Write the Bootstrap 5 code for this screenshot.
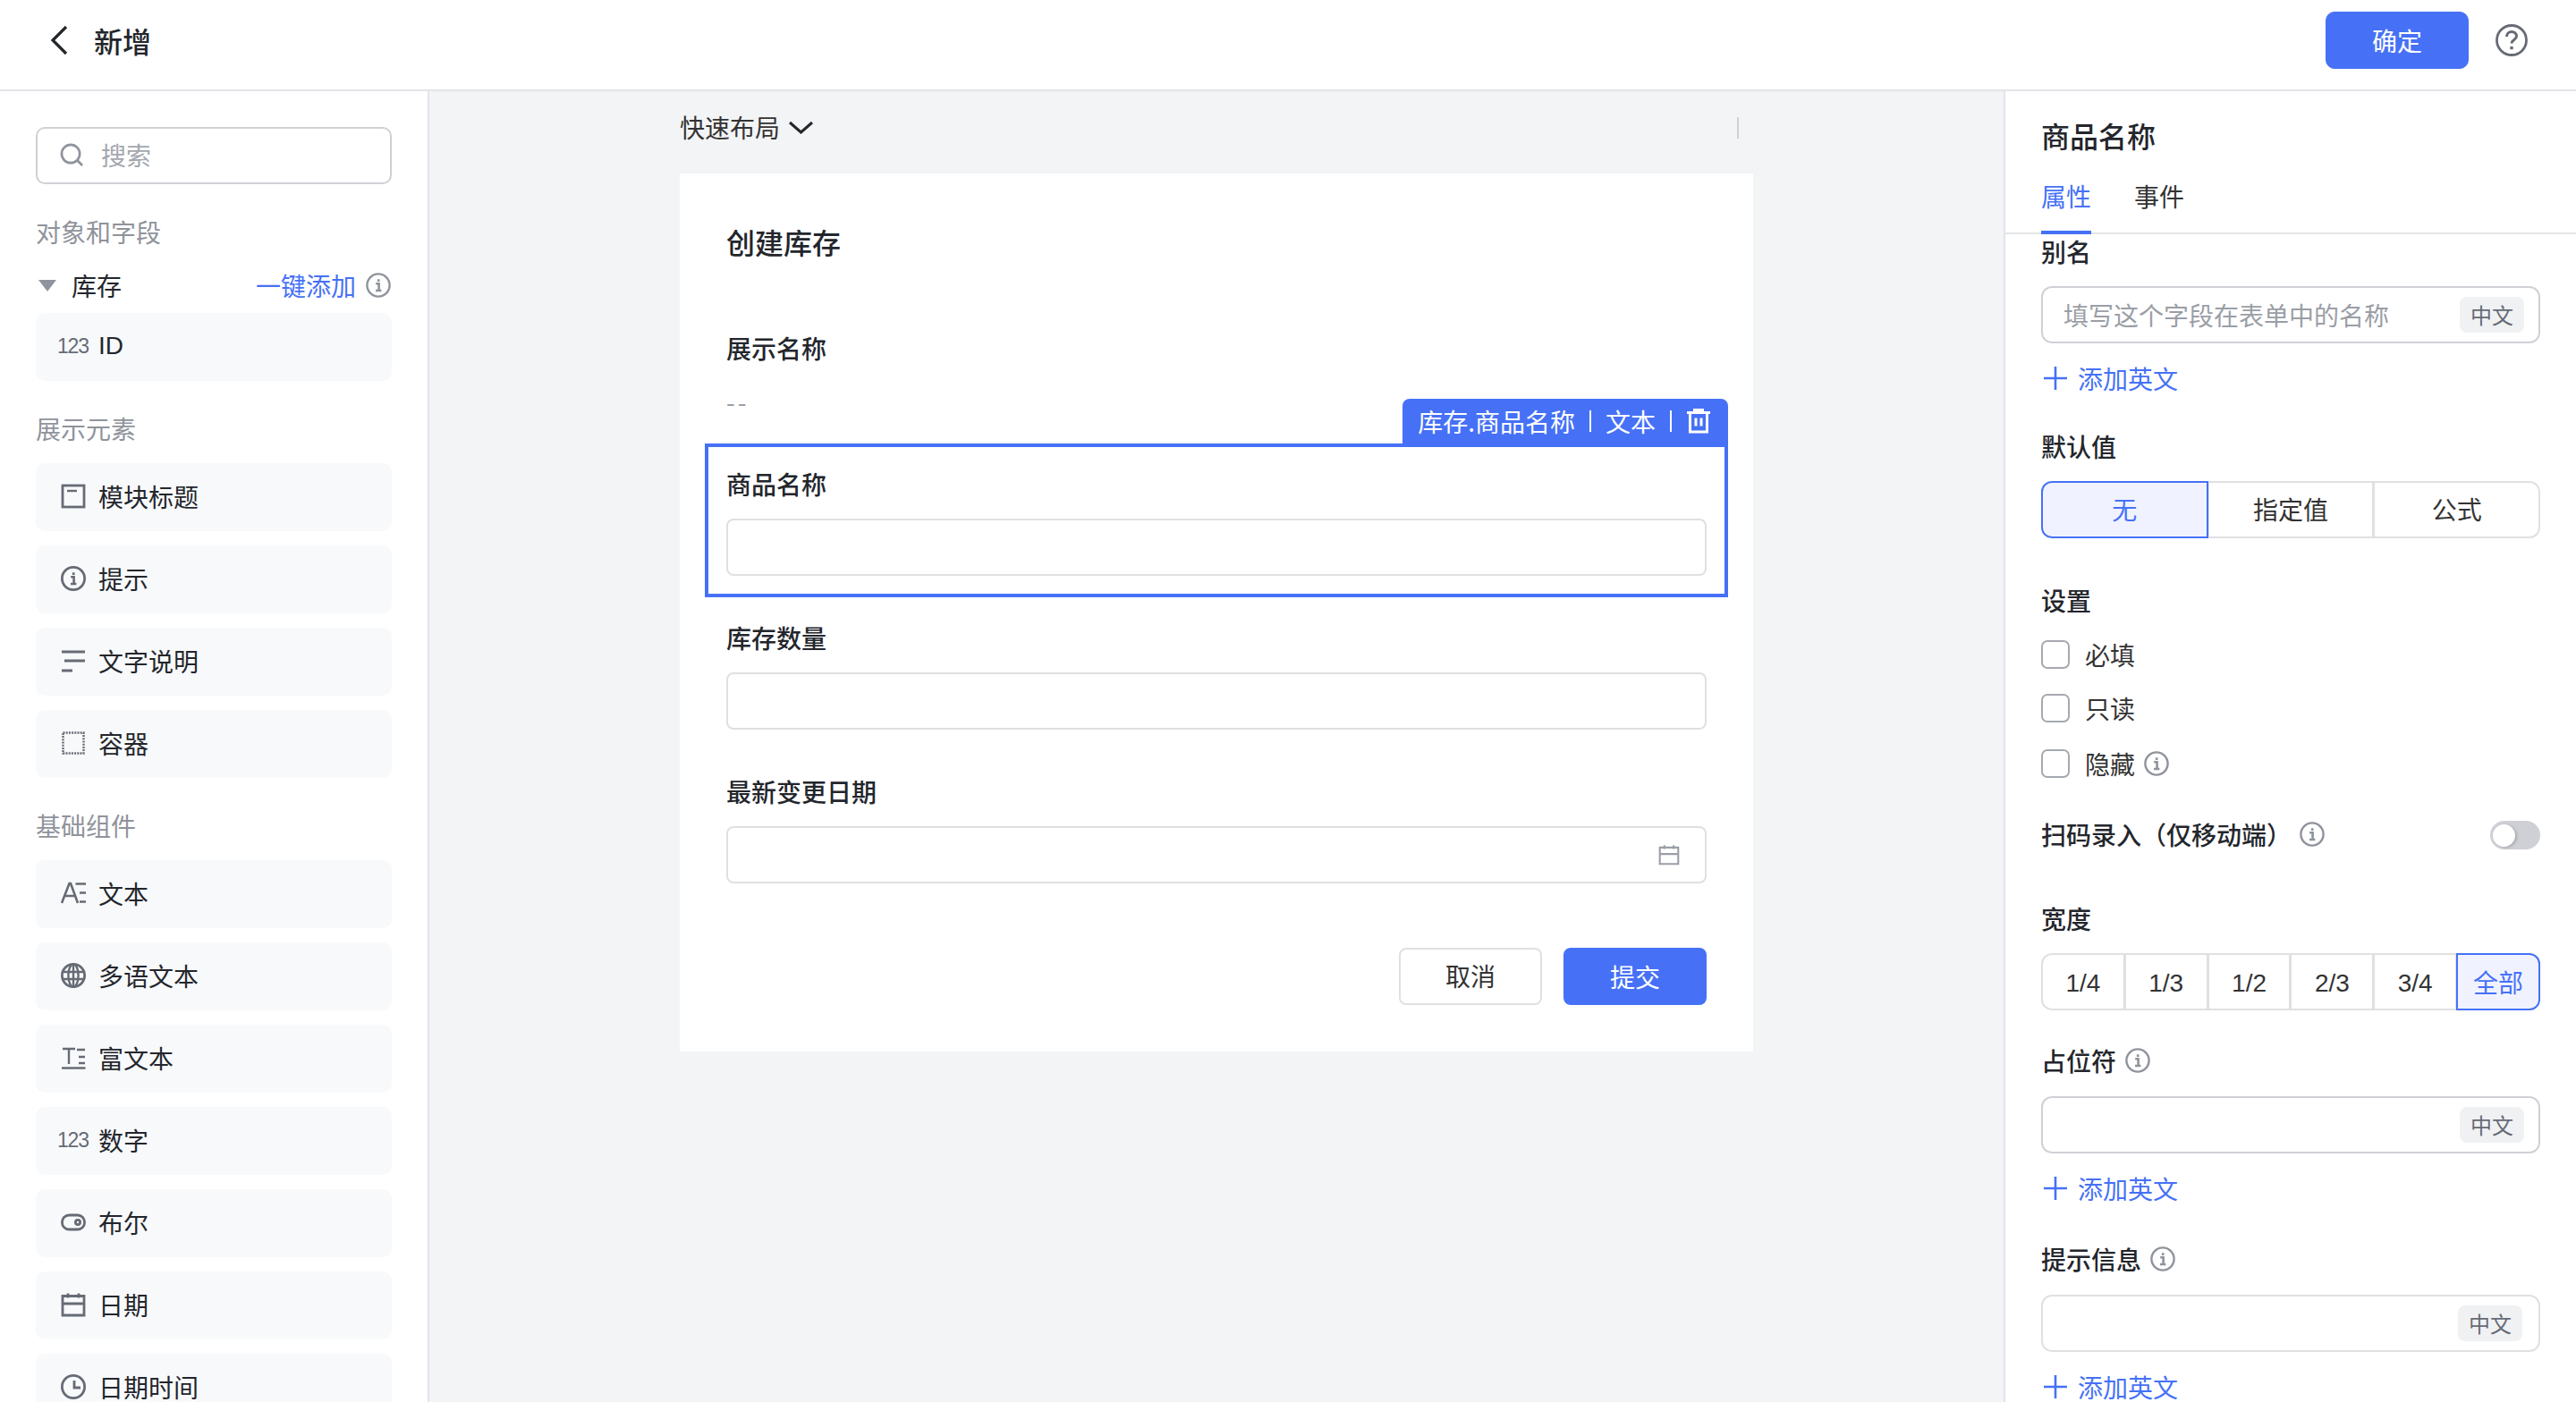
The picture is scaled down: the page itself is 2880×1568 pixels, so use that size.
<!doctype html>
<html lang="zh-CN">
<head>
<meta charset="utf-8">
<title>新增</title>
<link href="https://cdn.jsdelivr.net/npm/bootstrap@5.3.0/dist/css/bootstrap.min.css" rel="stylesheet">
<style>
:root{--blue:#4671f6;--ink:#23262c;--muted:#8f939b;--rule:#e3e4e8;--line:#e0e0e3;--soft:#d0d1d6;}
html,body{height:100%;}
body{width:2880px;height:1568px;overflow:hidden;font-family:"Noto Sans CJK SC","Liberation Sans",sans-serif;font-size:28px;line-height:40px;color:var(--ink);background:#fff;}
.latin{font-family:"Liberation Sans",sans-serif;}
.ic{display:block;flex:none;width:28px;height:28px;fill:none;stroke:currentColor;stroke-width:2.4;}
.top-strip{height:102px;border-bottom:2px solid var(--rule);padding:0 40px 10px 56px;}
.back-ic{width:20px;height:34px;color:var(--ink);stroke-width:3.2;}
.page-name{font-size:32px;font-weight:500;margin:0 0 0 29px;line-height:46px;}
.btn.btn-ok{width:160px;height:64px;margin-right:30px;background:var(--blue);border-color:var(--blue);color:#fff;font-size:28px;line-height:1;border-radius:10px;padding:0;}
.help-ic{width:36px;height:36px;color:#666b75;margin-right:14px;}
.work{height:1466px;}
.left-rail{width:480px;flex:none;border-right:2px solid var(--rule);padding:40px 40px 0;overflow:hidden;}
.search-box{height:64px;border:2px solid var(--soft);border-radius:10px;padding:0 0 2px 25px;gap:19px;color:#a4a7ae;}
.search-box svg{width:27px;height:27px;color:#8f939b;}
.rail-title{color:var(--muted);margin:34px 0 18px;height:40px;line-height:38px;}
.obj-row{height:40px;margin-bottom:10px;padding-bottom:2px;}
.caret{width:0;height:0;border-left:10px solid transparent;border-right:10px solid transparent;border-top:13px solid #8f939b;margin:0 17px 0 3px;}
.link-blue{color:var(--blue);}
.info-soft{color:#8f939b;}
.obj-info{margin:0 1px 0 11px;}
.rail-item{height:76px;background:#f8f9fb;border-radius:10px;padding:0 0 2px 28px;gap:14px;margin-bottom:16px;}
.rail-item .ic{color:#666b75;stroke-width:2.8;}
.rail-item .num{width:34px;margin-left:-4px;margin-right:-2px;font-size:23px;letter-spacing:-1.2px;color:#666b75;line-height:1;flex:none;}
.canvas{flex:1 1 auto;background:#f3f4f6;padding-left:280px;overflow:hidden;min-width:0;}
.canvas-in{width:1200px;}
.quick-bar{height:92px;padding:20px 16px 0 0;color:#333;}
.chev{width:29px;height:15px;margin-left:9px;color:var(--ink);stroke-width:3;}
.bar-rule{width:2px;height:24px;margin-top:9px;background:#d0d1d6;}
.form-sheet{background:#fff;padding:53px 52px 52px;height:982px;}
.form-name{font-size:32px;line-height:46px;font-weight:500;margin:0;}
.fld-label{font-weight:500;line-height:38px;height:40px;margin:0 0 18px;}
.shown-value{color:#9a9ea6;line-height:40px;margin:19px 0 27px;letter-spacing:3px;}
.form-control.plain-in{height:64px;border:2px solid var(--line);border-radius:8px;background:#fff;padding:0 26px;font-size:28px;box-shadow:none;}
.date-wrap{height:64px;border:2px solid var(--line);border-radius:8px;padding-right:28px;}
.date-wrap svg{color:#9a9ea6;width:24px;height:24px;}
.picked{position:relative;margin:0 -24px 26px;border:4px solid var(--blue);padding:22px 20px 20px;}
.picked .fld-label{margin-bottom:18px;}
.tag-bar{position:absolute;top:-54px;right:-4px;height:54px;padding:0 19px 4px 17px;gap:16px;background:var(--blue);color:#fff;border-radius:8px 8px 0 0;}
.tag-sep{width:2px;height:24px;background:#fff;}
.tag-bar svg{width:28px;height:28px;stroke-width:3;}
.btn-row{margin-top:72px;gap:24px;}
.btn.btn-ghost{width:160px;height:64px;padding:0 0 2px;border:2px solid var(--line);border-radius:8px;background:#fff;color:#333;font-size:28px;}
.btn.btn-fill{width:160px;height:64px;padding:0;border:2px solid var(--blue);border-radius:8px;background:var(--blue);color:#fff;font-size:28px;}
.prop-panel{width:640px;flex:none;border-left:2px solid var(--rule);overflow:hidden;}
.prop-head{padding:26px 40px 0 40px;}
.prop-name{font-size:32px;line-height:46px;font-weight:500;margin:0 0 26px 0;}
.tab-strip{border-bottom:2px solid var(--rule);padding-left:40px;gap:48px;}
.tab-one{height:62px;margin-bottom:-2px;color:#333;line-height:38px;border-bottom:4px solid transparent;}
.tab-one.on{color:var(--blue);border-bottom-color:var(--blue);}
.prop-body{padding:0 40px 0 40px;}
.prop-label{height:40px;padding-bottom:2px;font-weight:500;gap:10px;margin:0 0 18px;}
.lang-field{height:64px;border:2px solid var(--soft);border-radius:12px;padding:0 16px 0 23px;color:#9a9ea6;}
.lang-field.light{border-color:var(--line);padding-right:18px;}
.lang-chip{width:72px;height:40px;background:#f0f1f3;border-radius:8px;font-size:24px;line-height:40px;text-align:center;color:#666b75;flex:none;}
.add-en{height:40px;margin:20px 0 36px;gap:11px;color:var(--blue);padding:0 0 2px 2px;}
.add-en svg{stroke-width:2.6;}
.seg{height:64px;}
.seg .btn{flex:1 1 0;height:64px;padding:0;border:2px solid var(--line);background:#fff;color:#333;font-size:28px;border-radius:12px;}
.seg .btn.active{background:#f0f3ff;border-color:var(--blue);color:var(--blue);}
.seg.cjk .btn{padding-bottom:2px;}
.sec-gap{margin-top:50px;}
.chk-row{height:32px;margin-top:28px;gap:17px;color:#333;}
.chk-row.first{margin-top:24px;}
.chk-row.wide{margin-top:30px;}
.chk-row .form-check-input{width:32px;height:32px;margin:0;border:2px solid #a6a9b0;border-radius:7px;flex:none;}
.chk-row .txt{gap:10px;}
.scan-row{height:40px;margin-top:44px;font-weight:500;}
.scan-row .lab{gap:9px;padding-bottom:2px;}
.togg{width:56px;height:32px;border-radius:16px;background:#cfd0d5;padding-left:3px;}
.togg-knob{width:25px;height:25px;border-radius:50%;background:#fff;box-shadow:2px 1px 3px rgba(0,0,0,.18);}
</style>
</head>
<body>
<svg width="0" height="0" class="position-absolute">
  <symbol id="i-info" viewBox="0 0 28 28"><circle cx="14" cy="14" r="12.600"/><path d="M11.200 12.200h3.400v7.600M11 20h6.400M14.200 7.200v2.800" stroke-width="2.600"/></symbol>
  <symbol id="i-title" viewBox="0 0 28 28"><rect x="2" y="2" width="24" height="24"/><path d="M7 8h11" stroke-width="2.400"/></symbol>
  <symbol id="i-lines" viewBox="0 0 28 28"><path d="M1 4h26M4 14h23M1 25h12"/></symbol>
  <symbol id="i-box" viewBox="0 0 28 28"><rect x="2.500" y="2.500" width="23" height="23" stroke-width="2.400" stroke-dasharray="2 1.200"/></symbol>
  <symbol id="i-text" viewBox="0 0 28 28"><path d="M1 25 9.500 3H11l8 22M4.500 17H16M16.500 3.500H28M21 13.500h7M21 23.500h7" stroke-width="2.600"/></symbol>
  <symbol id="i-globe" viewBox="0 0 28 28"><circle cx="14" cy="14" r="12.600"/><ellipse cx="14" cy="14" rx="5.600" ry="12.600" stroke-width="2.400"/><path d="M14 1.400v25.200M2 10h24M2 18h24" stroke-width="2.400"/></symbol>
  <symbol id="i-rich" viewBox="0 0 28 28"><path d="M2 4h14M9 4v17M1 25.500h26.500M18 5h9M20 13h7M20 20h7" stroke-width="2.400"/></symbol>
  <symbol id="i-bool" viewBox="0 0 28 28"><rect x="1.400" y="6" width="25.200" height="16" rx="8"/><circle cx="19" cy="14" r="2.600"/></symbol>
  <symbol id="i-date" viewBox="0 0 28 28"><path d="M2 4.500h24V26H2zM2 13h24M8 1.500v5M20 1.500v5"/></symbol>
  <symbol id="i-clock" viewBox="0 0 28 28"><circle cx="14" cy="14" r="12.600"/><path d="M15 7v8h7"/></symbol>
  <symbol id="i-plus" viewBox="0 0 28 28"><path d="M14 1v26M1 14h26"/></symbol>
  <symbol id="i-trash" viewBox="0 0 28 28"><path d="M1 4.500h26M9.500 4V1.500h9V4M4.500 4.500V26h19V4.500M11 10.500v9M17 10.500v9"/></symbol>
</svg>

<header class="top-strip d-flex align-items-center justify-content-between">
  <div class="d-flex align-items-center">
    <svg class="ic back-ic" viewBox="0 0 20 34"><path d="M18 2 3 17l15 15"/></svg>
    <h1 class="page-name">新增</h1>
  </div>
  <div class="d-flex align-items-center">
    <button type="button" class="btn btn-ok">确定</button>
    <svg class="ic help-ic" viewBox="0 0 36 36"><circle cx="18" cy="18" r="16.500" stroke-width="2.800"/><path d="M12.500 14c0-3.200 2.400-5.500 5.500-5.500s5.500 2.200 5.500 5c0 3.900-5.500 4-5.500 8" stroke-width="3"/><path d="M18 25v3.200" stroke-width="3.400"/></svg>
  </div>
</header>

<main class="work d-flex">
  <aside class="left-rail">
    <div class="search-box d-flex align-items-center">
      <svg class="ic" viewBox="0 0 28 28"><circle cx="12.500" cy="12.500" r="10.500" stroke-width="2.800"/><path d="m20 20 6 6" stroke-width="2.800"/></svg>
      <span>搜索</span>
    </div>
    <div class="rail-title" style="margin-bottom:20px">对象和字段</div>
    <div class="obj-row d-flex align-items-center">
      <span class="caret"></span>
      <span class="flex-grow-1">库存</span>
      <span class="link-blue">一键添加</span>
      <svg class="ic info-soft obj-info"><use href="#i-info"/></svg>
    </div>
    <div class="rail-item d-flex align-items-center" style="margin-bottom:0"><span class="num latin">123</span><span class="latin">ID</span></div>

    <div class="rail-title">展示元素</div>
    <div class="rail-item d-flex align-items-center"><svg class="ic"><use href="#i-title"/></svg><span>模块标题</span></div>
    <div class="rail-item d-flex align-items-center"><svg class="ic"><use href="#i-info"/></svg><span>提示</span></div>
    <div class="rail-item d-flex align-items-center"><svg class="ic"><use href="#i-lines"/></svg><span>文字说明</span></div>
    <div class="rail-item d-flex align-items-center" style="margin-bottom:0"><svg class="ic"><use href="#i-box"/></svg><span>容器</span></div>

    <div class="rail-title">基础组件</div>
    <div class="rail-item d-flex align-items-center"><svg class="ic"><use href="#i-text"/></svg><span>文本</span></div>
    <div class="rail-item d-flex align-items-center"><svg class="ic"><use href="#i-globe"/></svg><span>多语文本</span></div>
    <div class="rail-item d-flex align-items-center"><svg class="ic"><use href="#i-rich"/></svg><span>富文本</span></div>
    <div class="rail-item d-flex align-items-center"><span class="num latin">123</span><span>数字</span></div>
    <div class="rail-item d-flex align-items-center"><svg class="ic"><use href="#i-bool"/></svg><span>布尔</span></div>
    <div class="rail-item d-flex align-items-center"><svg class="ic"><use href="#i-date"/></svg><span>日期</span></div>
    <div class="rail-item d-flex align-items-center"><svg class="ic"><use href="#i-clock"/></svg><span>日期时间</span></div>
  </aside>

  <section class="canvas">
    <div class="canvas-in">
      <div class="quick-bar d-flex align-items-start justify-content-between">
        <div class="d-flex align-items-center">快速布局<svg class="ic chev" viewBox="0 0 29 15"><path d="m2 2 12.500 11L27 2"/></svg></div>
        <span class="bar-rule"></span>
      </div>
      <form class="form-sheet">
        <h2 class="form-name">创建库存</h2>
        <div class="fld-label" style="margin:77px 0 0">展示名称</div>
        <div class="shown-value">--</div>
        <div class="picked">
          <div class="tag-bar d-flex align-items-center">
            <span>库存.商品名称</span><span class="tag-sep"></span><span>文本</span><span class="tag-sep"></span>
            <svg class="ic"><use href="#i-trash"/></svg>
          </div>
          <div class="fld-label">商品名称</div>
          <input type="text" class="form-control plain-in" aria-label="商品名称">
        </div>
        <div class="fld-label">库存数量</div>
        <input type="text" class="form-control plain-in" aria-label="库存数量">
        <div class="fld-label" style="margin-top:50px">最新变更日期</div>
        <div class="date-wrap d-flex align-items-center justify-content-end">
          <svg class="ic"><use href="#i-date"/></svg>
        </div>
        <div class="btn-row d-flex justify-content-end">
          <button type="button" class="btn btn-ghost">取消</button>
          <button type="button" class="btn btn-fill">提交</button>
        </div>
      </form>
    </div>
  </section>

  <aside class="prop-panel">
    <div class="prop-head"><h2 class="prop-name">商品名称</h2></div>
    <div class="tab-strip d-flex">
      <div class="tab-one on">属性</div>
      <div class="tab-one">事件</div>
    </div>
    <div class="prop-body">
      <div class="prop-label d-flex align-items-center">别名</div>
      <div class="lang-field d-flex align-items-center justify-content-between"><span>填写这个字段在表单中的名称</span><span class="lang-chip">中文</span></div>
      <div class="add-en d-flex align-items-center"><svg class="ic"><use href="#i-plus"/></svg><span>添加英文</span></div>

      <div class="prop-label d-flex align-items-center">默认值</div>
      <div class="btn-group seg cjk w-100" role="group">
        <button type="button" class="btn active">无</button>
        <button type="button" class="btn">指定值</button>
        <button type="button" class="btn">公式</button>
      </div>

      <div class="prop-label d-flex align-items-center sec-gap" style="margin-bottom:0">设置</div>
      <div class="chk-row first d-flex align-items-center"><input class="form-check-input" type="checkbox" aria-label="必填"><span>必填</span></div>
      <div class="chk-row d-flex align-items-center"><input class="form-check-input" type="checkbox" aria-label="只读"><span>只读</span></div>
      <div class="chk-row wide d-flex align-items-center"><input class="form-check-input" type="checkbox" aria-label="隐藏"><span class="txt d-flex align-items-center">隐藏<svg class="ic info-soft"><use href="#i-info"/></svg></span></div>

      <div class="scan-row d-flex align-items-center justify-content-between">
        <span class="lab d-flex align-items-center">扫码录入（仅移动端）<svg class="ic info-soft"><use href="#i-info"/></svg></span>
        <span class="togg d-flex align-items-center"><span class="togg-knob"></span></span>
      </div>

      <div class="prop-label d-flex align-items-center" style="margin-top:54px">宽度</div>
      <div class="btn-group seg w-100" role="group">
        <button type="button" class="btn"><span class="latin">1/4</span></button>
        <button type="button" class="btn"><span class="latin">1/3</span></button>
        <button type="button" class="btn"><span class="latin">1/2</span></button>
        <button type="button" class="btn"><span class="latin">2/3</span></button>
        <button type="button" class="btn"><span class="latin">3/4</span></button>
        <button type="button" class="btn active">全部</button>
      </div>

      <div class="prop-label d-flex align-items-center" style="margin-top:37px;margin-bottom:19px">占位符<svg class="ic info-soft"><use href="#i-info"/></svg></div>
      <div class="lang-field d-flex align-items-center justify-content-end"><span class="lang-chip">中文</span></div>
      <div class="add-en d-flex align-items-center" style="margin-bottom:39px"><svg class="ic"><use href="#i-plus"/></svg><span>添加英文</span></div>

      <div class="prop-label d-flex align-items-center" style="margin-bottom:19px">提示信息<svg class="ic info-soft"><use href="#i-info"/></svg></div>
      <div class="lang-field light d-flex align-items-center justify-content-end"><span class="lang-chip">中文</span></div>
      <div class="add-en d-flex align-items-center"><svg class="ic"><use href="#i-plus"/></svg><span>添加英文</span></div>
    </div>
  </aside>
</main>
<script src="https://cdn.jsdelivr.net/npm/bootstrap@5.3.0/dist/js/bootstrap.bundle.min.js"></script>
</body>
</html>
